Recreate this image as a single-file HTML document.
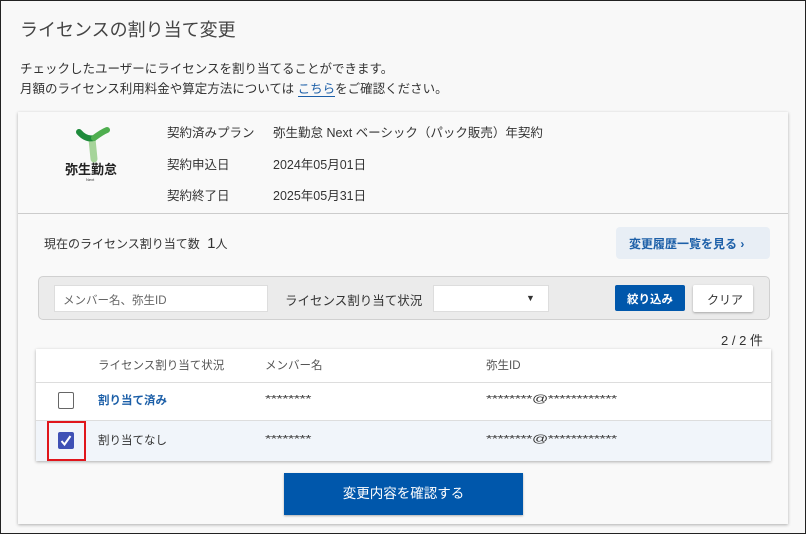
<!DOCTYPE html>
<html><head><meta charset="utf-8"><style>
*{box-sizing:border-box;margin:0;padding:0}
body{width:806px;height:534px;overflow:hidden;background:#fff;font-family:"Liberation Sans","Noto Sans CJK JP",sans-serif;color:#333;position:relative}
.frame{position:absolute;left:0;top:0;width:806px;height:534px;border:1px solid #222;background:#f8f8f8}
.a{position:absolute;white-space:nowrap}
.card{position:absolute;left:17px;top:111px;width:770px;height:412px;background:#f9f9f9;box-shadow:0 1px 3px rgba(0,0,0,.3)}
.blue{color:#1c5fa8}
.ast{font-size:10px;letter-spacing:-0.3px;transform:scaleX(1.6);transform-origin:left}
</style></head><body><div class="frame">
<div class="a" style="left:19px;top:15px;font-size:18px;color:#444">ライセンスの割り当て変更</div>
<div class="a" style="left:19px;top:57px;font-size:12.5px;color:#333">チェックしたユーザーにライセンスを割り当てることができます。</div>
<div class="a" style="left:19px;top:77px;font-size:12.5px;color:#333">月額のライセンス利用料金や算定方法については <span class="blue" style="border-bottom:1px solid #1c5fa8">こちら</span>をご確認ください。</div>
<div class="card">
 <svg class="a" style="left:56px;top:14px" width="50" height="40" viewBox="0 0 50 40"><path d="M18 13 L20 33" stroke="#a6d49a" stroke-width="7" stroke-linecap="round"/><path d="M5 6 Q12 14 20 12" stroke="#1f8b3c" stroke-width="6" fill="none" stroke-linecap="round"/><path d="M20 12 Q28 6 33 4" stroke="#4fae4f" stroke-width="6" fill="none" stroke-linecap="round"/></svg>
 <div class="a" style="left:47px;top:47px;font-size:13px;font-weight:bold;color:#222">弥生勤怠</div>
 <div class="a" style="left:68px;top:65px;font-size:4px;color:#333">Next</div>
 <div class="a" style="left:149px;top:10px;font-size:12.5px">契約済みプラン</div>
 <div class="a" style="left:255px;top:10px;font-size:12.5px">弥生勤怠 Next ベーシック（パック販売）年契約</div>
 <div class="a" style="left:149px;top:42px;font-size:12.5px">契約申込日</div>
 <div class="a" style="left:255px;top:42px;font-size:12.5px">2024年05月01日</div>
 <div class="a" style="left:149px;top:73px;font-size:12.5px">契約終了日</div>
 <div class="a" style="left:255px;top:73px;font-size:12.5px">2025年05月31日</div>
 <div class="a" style="left:0;top:101px;width:770px;height:1px;background:#ccc"></div>
 <div class="a" style="left:26px;top:123px;font-size:12px">現在のライセンス割り当て数 <span style="font-size:15px;margin-left:4px">1</span>人</div>
 <div class="a" style="left:598px;top:115px;width:154px;height:32px;background:#e8eef5;border-radius:4px;font-size:12px;color:#1c5fa8;padding:8px 0 0 13px;font-weight:bold">変更履歴一覧を見る ›</div>
 <div class="a" style="left:20px;top:164px;width:732px;height:44px;background:#ebebeb;border:1px solid #d0d0d0;border-radius:5px"></div>
 <div class="a" style="left:36px;top:173px;width:214px;height:27px;background:#fff;border:1px solid #ddd;font-size:11.5px;color:#666;padding:6px 0 0 8px">メンバー名、弥生ID</div>
 <div class="a" style="left:267px;top:178px;font-size:12.5px">ライセンス割り当て状況</div>
 <div class="a" style="left:415px;top:173px;width:116px;height:27px;background:#fff;border:1px solid #ddd;font-size:9px;padding:7px 0 0 92px">▼</div>
 <div class="a" style="left:597px;top:173px;width:70px;height:26px;background:#0057ab;color:#fff;font-size:11.5px;font-weight:bold;padding:6px 0 0 12px;border-radius:2px">絞り込み</div>
 <div class="a" style="left:675px;top:173px;width:60px;height:27px;background:#fff;box-shadow:0 1px 2px rgba(0,0,0,.3);font-size:12px;padding:6px 0 0 14px;border-radius:2px">クリア</div>
 <div class="a" style="left:703px;top:218px;font-size:13px">2 / 2 件</div>
 <div class="a" style="left:18px;top:237px;width:735px;height:112px;background:#fff;box-shadow:0 1px 3px rgba(0,0,0,.3)">
  <div class="a" style="left:62px;top:8px;font-size:11.5px;color:#555">ライセンス割り当て状況</div>
  <div class="a" style="left:229px;top:8px;font-size:11.5px;color:#555">メンバー名</div>
  <div class="a" style="left:450px;top:8px;font-size:11.5px;color:#555">弥生ID</div>
  <div class="a" style="left:0;top:33px;width:735px;height:1px;background:#ddd"></div>
  <div class="a" style="left:22px;top:43px;width:16px;height:17px;border:1.5px solid #666;border-radius:2px"></div>
  <div class="a blue" style="left:62px;top:43px;font-size:11.5px;font-weight:bold">割り当て済み</div>
  <div class="a ast" style="left:229px;top:45px">********</div>
  <div class="a ast" style="left:450px;top:45px">********@************</div>
  <div class="a" style="left:0;top:71px;width:735px;height:41px;background:#f1f5fa;border-top:1px solid #ddd"></div>
  <div class="a" style="left:22px;top:83px;width:16px;height:17px;background:#3f51b5;border-radius:2px"><svg width="16" height="17" viewBox="0 0 16 17"><path d="M3.5 9 L6.5 12.5 L12.5 4" stroke="#fff" stroke-width="2" fill="none"/></svg></div>
  <div class="a" style="left:11px;top:72px;width:39px;height:40px;border:2.5px solid #e0161c"></div>
  <div class="a" style="left:62px;top:83px;font-size:11.5px">割り当てなし</div>
  <div class="a ast" style="left:229px;top:85px">********</div>
  <div class="a ast" style="left:450px;top:85px">********@************</div>
 </div>
 <div class="a" style="left:266px;top:361px;width:239px;height:42px;background:#0057ab;color:#fff;font-size:13.5px;text-align:center;line-height:42px;box-shadow:0 1px 2px rgba(0,0,0,.3)">変更内容を確認する</div>
</div>
</div></body></html>
